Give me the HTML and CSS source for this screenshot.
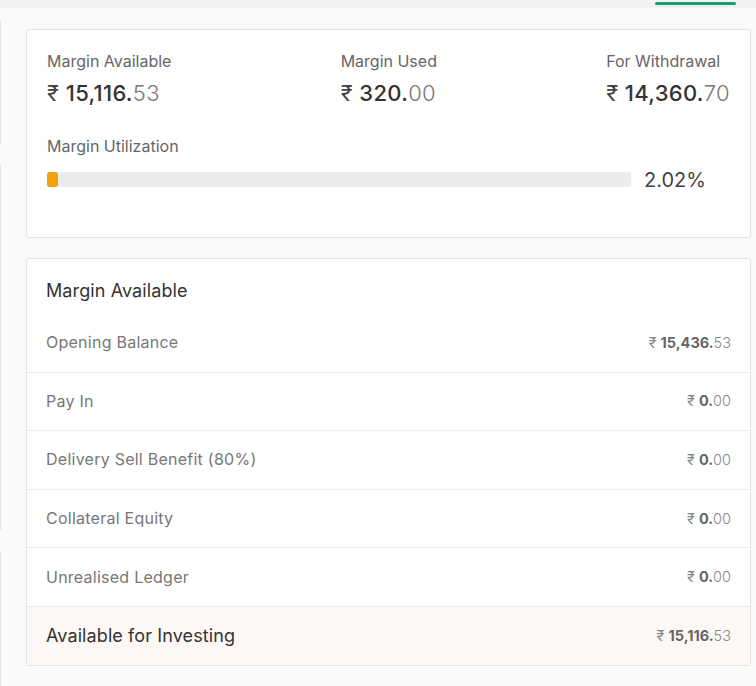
FILE: index.html
```html
<!DOCTYPE html>
<html>
<head>
<meta charset="utf-8">
<link rel="stylesheet" href="styles.css">
</head>
<body>
<div class="topbar"><span class="tab-indicator"></span></div>
<div class="layout">
  <div class="side">
    <div class="side-box b1"></div>
    <div class="side-box b2"></div>
    <div class="side-box b3"></div>
  </div>
  <div class="main">
    <section class="card summary">
      <div class="stats">
        <div class="stat">
          <div class="stat-label">Margin Available</div>
          <div class="stat-value"><span class="cur">₹</span> <span class="int">15,116.</span><span class="dec">53</span></div>
        </div>
        <div class="stat">
          <div class="stat-label">Margin Used</div>
          <div class="stat-value"><span class="cur">₹</span> <span class="int">320.</span><span class="dec">00</span></div>
        </div>
        <div class="stat">
          <div class="stat-label">For Withdrawal</div>
          <div class="stat-value"><span class="cur">₹</span> <span class="int">14,360.</span><span class="dec">70</span></div>
        </div>
      </div>
      <div class="util-label">Margin Utilization</div>
      <div class="util-row">
        <div class="bar"><div class="bar-fill" style="width:11px"></div></div>
        <div class="pct">2.02%</div>
      </div>
    </section>

    <section class="card details">
      <div class="details-head">Margin Available</div>
      <div class="row"><span class="row-label">Opening Balance</span><span class="amt"><span class="cur">₹</span> <b>15,436.</b><span class="dec">53</span></span></div>
      <div class="row"><span class="row-label">Pay In</span><span class="amt"><span class="cur">₹</span> <b>0.</b><span class="dec">00</span></span></div>
      <div class="row"><span class="row-label">Delivery Sell Benefit (80%)</span><span class="amt"><span class="cur">₹</span> <b>0.</b><span class="dec">00</span></span></div>
      <div class="row"><span class="row-label">Collateral Equity</span><span class="amt"><span class="cur">₹</span> <b>0.</b><span class="dec">00</span></span></div>
      <div class="row"><span class="row-label">Unrealised Ledger</span><span class="amt"><span class="cur">₹</span> <b>0.</b><span class="dec">00</span></span></div>
      <div class="row total"><span class="row-label">Available for Investing</span><span class="amt"><span class="cur">₹</span> <b>15,116.</b><span class="dec">53</span></span></div>
    </section>
  </div>
</div>
</body>
</html>
```
FILE: styles.css
```css
* { box-sizing: border-box; }
html, body { margin: 0; padding: 0; }
body {
  background: #fafafa;
  font-family: Inter, Lato, "Open Sans", "DejaVu Sans", sans-serif;
  color: #444;
  width: 756px;
  height: 686px;
  overflow: hidden;
}
.topbar {
  height: 6px;
  background: #f2f2f2;
  box-shadow: 0 1px 3px rgba(0,0,0,0.08);
  position: relative;
  z-index: 2;
}
.tab-indicator {
  position: absolute;
  left: 655px;
  top: 2px;
  width: 81px;
  height: 3px;
  border-radius: 2px;
  background: #1d9e70;
}
.layout {
  display: flex;
}
.side {
  width: 2px;
  display: flex;
  flex-direction: column;
}
.side-box {
  border-right: 1px solid #e4e4e4;
  width: 1px;
}
.b1 { margin-top: 14px; height: 125px; }
.b2 { margin-top: 20px; height: 365px; }
.b3 { margin-top: 22px; height: 200px; }
.main {
  margin-left: 24px;
  width: 725px;
  padding-top: 23px;
}
.card {
  background: #fff;
  border: 1px solid #e3e3e3;
  border-radius: 3px;
}
.summary {
  height: 209px;
  padding: 21px 20px 0 20px;
}
.stats {
  display: flex;
  justify-content: space-between;
}
.stat-label {
  font-size: 16px;
  line-height: 20px;
  color: #666;
  letter-spacing: 0;
}
.stat-value {
  margin-top: 8px;
  font-size: 22px;
  line-height: 28px;
  color: #444;
  letter-spacing: 0.3px;
}
.stat-value .cur { color: #444; }
.stat-value .int { color: #333; font-weight: 500; }
.stat-value .dec { color: #777; font-weight: 300; }
.util-label {
  margin-top: 29px;
  font-size: 16px;
  line-height: 20px;
  color: #666;
}
.util-row {
  margin-top: 11px;
  display: flex;
  align-items: center;
}
.bar {
  flex: 1;
  height: 15px;
  background: #ececec;
  border-radius: 2px;
}
.bar-fill {
  height: 15px;
  background: #f0a00c;
  border-radius: 3px;
}
.pct {
  width: 86px;
  margin-left: 13px;
  font-size: 20px;
  line-height: 24px;
  color: #444;
  padding-top: 1px;
}
.details {
  margin-top: 20px;
  height: 408px;
  overflow: hidden;
}
.details-head {
  padding: 20px 19px 0 19px;
  height: 55px;
  font-size: 18px;
  line-height: 24px;
  color: #333;
  letter-spacing: 0.1px;
}
.row {
  height: 58.6px;
  padding: 0 19px 1px 19px;
  display: flex;
  align-items: center;
  justify-content: space-between;
  border-bottom: 1px solid #ececec;
}
.row-label {
  font-size: 16px;
  color: #777;
  letter-spacing: 0.25px;
}
.amt {
  font-size: 14.5px;
  color: #888;
  letter-spacing: 0;
}
.amt b { color: #666; font-weight: 700; }
.amt .dec { color: #888; font-weight: 300; }
.row.total {
  background: #fdf8f5;
  border-bottom: none;
}
.row.total .row-label {
  font-size: 18px;
  color: #333;
  letter-spacing: 0.1px;
}
```
